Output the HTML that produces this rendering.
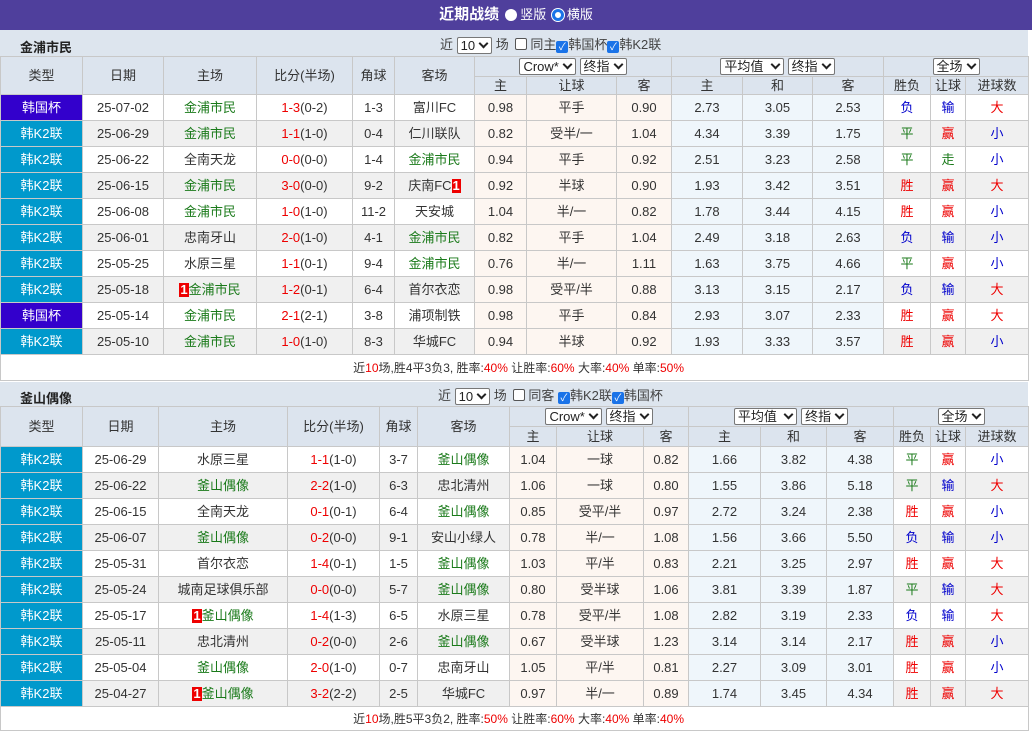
<!DOCTYPE html>
<html><head><meta charset="utf-8"><style>
*{margin:0;padding:0;box-sizing:border-box}
body{width:1032px;height:732px;background:#fff;font-family:"Liberation Sans","Noto Sans CJK SC",sans-serif;font-size:12px;color:#333;position:relative;overflow:hidden}
.top{position:absolute;left:0;top:0;width:1032px;height:30px;background:#4f3f9c;color:#fff;text-align:center;line-height:30px;font-size:13px}
.top b{font-size:15px;margin-right:4px}
.rad{display:inline-block;width:12px;height:12px;border-radius:50%;background:#fff;vertical-align:-2px;margin:0 3px 0 2px}
.rad.on{border:3px solid #1a73e8;background:#fff;box-shadow:0 0 0 1px #fff}
.sec{position:absolute;left:0;width:1028px}
.bar{height:26px;background:#dde5ee;position:relative;font-size:12px}
.bar .t{position:absolute;left:20px;top:7px;font-weight:bold;font-size:13px;color:#222}
.bar .c{position:absolute;top:4px;white-space:nowrap;font-size:13px;color:#444}
.sel{display:inline-block;border:1px solid #777;background:#fff;border-radius:2px;height:17px;line-height:15px;padding:0 3px;font-size:13px;color:#222;vertical-align:middle}
.sel:after{content:"";display:inline-block;width:5px;height:5px;border-right:2px solid #222;border-bottom:2px solid #222;transform:rotate(45deg);margin:0 1px 3px 5px}
.cb{display:inline-block;width:12px;height:12px;border:1px solid #555;border-radius:2px;background:#fff;vertical-align:-1px;margin:0 3px}
.cb.on{background:#1a73e8;border-color:#1a73e8;color:#fff;font-size:10px;line-height:11px;text-align:center;margin:0}
table{border-collapse:collapse;table-layout:fixed;width:1028px}
td,th{border:1px solid #c8c8c8;text-align:center;font-weight:normal;white-space:nowrap;overflow:hidden;padding:0}
th{background:#dce4ee;color:#333;font-size:13px;line-height:16px}
tr.d td{height:26px;font-size:13px;line-height:16px}
tr.d:nth-child(even) td{background:#f0f0f0}
tr.d td.p{background:#fdf6f1 !important}
tr.d td.b{background:#eff6fb !important}
.k1{background:#3300cc !important;color:#fff}
.k2{background:#0099cc !important;color:#fff}
.g{color:#1a7a1a}.r{color:#e00}.bl{color:#00c}
.n{display:inline-block;background:#e00;color:#fff;font-weight:bold;padding:0 1px;line-height:14px}
.sum td{height:26px;text-align:right;padding-right:344px;font-size:12px;background:#fff}
.sum span{color:#e00}
</style></head><body>
<div class="top"><b>近期战绩</b><span class="rad"></span>竖版 <span class="rad on"></span>横版</div>

<div class="sec" style="top:30px">
<div class="bar"><span class="t">金浦市民</span><span class="c" style="left:440px">近 <span class="sel">10</span> 场 <span class="cb"></span>同主<span class="cb on">✓</span>韩国杯<span class="cb on">✓</span>韩K2联</span></div>
<table>
<colgroup><col style="width:82px"><col style="width:81px"><col style="width:93px"><col style="width:96px"><col style="width:42px"><col style="width:80px"><col style="width:52px"><col style="width:90px"><col style="width:55px"><col style="width:71px"><col style="width:70px"><col style="width:71px"><col style="width:47px"><col style="width:35px"><col style="width:63px"></colgroup>
<tr style="height:20px"><th rowspan="2">类型</th><th rowspan="2">日期</th><th rowspan="2">主场</th><th rowspan="2">比分(半场)</th><th rowspan="2">角球</th><th rowspan="2">客场</th><th colspan="3"><span class="sel">Crow*</span> <span class="sel">终指</span></th><th colspan="3"><span class="sel">平均值&nbsp;</span> <span class="sel">终指</span></th><th colspan="3"><span class="sel">全场</span></th></tr>
<tr style="height:18px"><th>主</th><th>让球</th><th>客</th><th>主</th><th>和</th><th>客</th><th>胜负</th><th>让球</th><th>进球数</th></tr>
<tr class="d"><td class="k1">韩国杯</td><td>25-07-02</td><td class="g">金浦市民</td><td><span class="r">1-3</span>(0-2)</td><td>1-3</td><td>富川FC</td><td class="p">0.98</td><td class="p">平手</td><td class="p">0.90</td><td class="b">2.73</td><td class="b">3.05</td><td class="b">2.53</td><td class="bl">负</td><td class="bl">输</td><td class="r">大</td></tr>
<tr class="d"><td class="k2">韩K2联</td><td>25-06-29</td><td class="g">金浦市民</td><td><span class="r">1-1</span>(1-0)</td><td>0-4</td><td>仁川联队</td><td class="p">0.82</td><td class="p">受半/一</td><td class="p">1.04</td><td class="b">4.34</td><td class="b">3.39</td><td class="b">1.75</td><td class="g">平</td><td class="r">赢</td><td class="bl">小</td></tr>
<tr class="d"><td class="k2">韩K2联</td><td>25-06-22</td><td>全南天龙</td><td><span class="r">0-0</span>(0-0)</td><td>1-4</td><td class="g">金浦市民</td><td class="p">0.94</td><td class="p">平手</td><td class="p">0.92</td><td class="b">2.51</td><td class="b">3.23</td><td class="b">2.58</td><td class="g">平</td><td class="g">走</td><td class="bl">小</td></tr>
<tr class="d"><td class="k2">韩K2联</td><td>25-06-15</td><td class="g">金浦市民</td><td><span class="r">3-0</span>(0-0)</td><td>9-2</td><td>庆南FC<span class="n">1</span></td><td class="p">0.92</td><td class="p">半球</td><td class="p">0.90</td><td class="b">1.93</td><td class="b">3.42</td><td class="b">3.51</td><td class="r">胜</td><td class="r">赢</td><td class="r">大</td></tr>
<tr class="d"><td class="k2">韩K2联</td><td>25-06-08</td><td class="g">金浦市民</td><td><span class="r">1-0</span>(1-0)</td><td>11-2</td><td>天安城</td><td class="p">1.04</td><td class="p">半/一</td><td class="p">0.82</td><td class="b">1.78</td><td class="b">3.44</td><td class="b">4.15</td><td class="r">胜</td><td class="r">赢</td><td class="bl">小</td></tr>
<tr class="d"><td class="k2">韩K2联</td><td>25-06-01</td><td>忠南牙山</td><td><span class="r">2-0</span>(1-0)</td><td>4-1</td><td class="g">金浦市民</td><td class="p">0.82</td><td class="p">平手</td><td class="p">1.04</td><td class="b">2.49</td><td class="b">3.18</td><td class="b">2.63</td><td class="bl">负</td><td class="bl">输</td><td class="bl">小</td></tr>
<tr class="d"><td class="k2">韩K2联</td><td>25-05-25</td><td>水原三星</td><td><span class="r">1-1</span>(0-1)</td><td>9-4</td><td class="g">金浦市民</td><td class="p">0.76</td><td class="p">半/一</td><td class="p">1.11</td><td class="b">1.63</td><td class="b">3.75</td><td class="b">4.66</td><td class="g">平</td><td class="r">赢</td><td class="bl">小</td></tr>
<tr class="d"><td class="k2">韩K2联</td><td>25-05-18</td><td class="g"><span class="n">1</span>金浦市民</td><td><span class="r">1-2</span>(0-1)</td><td>6-4</td><td>首尔衣恋</td><td class="p">0.98</td><td class="p">受平/半</td><td class="p">0.88</td><td class="b">3.13</td><td class="b">3.15</td><td class="b">2.17</td><td class="bl">负</td><td class="bl">输</td><td class="r">大</td></tr>
<tr class="d"><td class="k1">韩国杯</td><td>25-05-14</td><td class="g">金浦市民</td><td><span class="r">2-1</span>(2-1)</td><td>3-8</td><td>浦项制铁</td><td class="p">0.98</td><td class="p">平手</td><td class="p">0.84</td><td class="b">2.93</td><td class="b">3.07</td><td class="b">2.33</td><td class="r">胜</td><td class="r">赢</td><td class="r">大</td></tr>
<tr class="d"><td class="k2">韩K2联</td><td>25-05-10</td><td class="g">金浦市民</td><td><span class="r">1-0</span>(1-0)</td><td>8-3</td><td>华城FC</td><td class="p">0.94</td><td class="p">半球</td><td class="p">0.92</td><td class="b">1.93</td><td class="b">3.33</td><td class="b">3.57</td><td class="r">胜</td><td class="r">赢</td><td class="bl">小</td></tr>
<tr class="sum"><td colspan="15">近<span>10</span>场,胜4平3负3, 胜率:<span>40%</span> 让胜率:<span>60%</span> 大率:<span>40%</span> 单率:<span>50%</span></td></tr>
</table>
</div>

<div class="sec" style="top:382px">
<div class="bar" style="height:24px"><span class="t" style="top:6px">釜山偶像</span><span class="c" style="left:438px;top:3px">近 <span class="sel">10</span> 场 <span class="cb"></span>同客 <span class="cb on">✓</span>韩K2联<span class="cb on">✓</span>韩国杯</span></div>
<table>
<colgroup><col style="width:82px"><col style="width:76px"><col style="width:129px"><col style="width:92px"><col style="width:38px"><col style="width:92px"><col style="width:47px"><col style="width:87px"><col style="width:45px"><col style="width:72px"><col style="width:66px"><col style="width:67px"><col style="width:37px"><col style="width:35px"><col style="width:63px"></colgroup>
<tr style="height:20px"><th rowspan="2">类型</th><th rowspan="2">日期</th><th rowspan="2">主场</th><th rowspan="2">比分(半场)</th><th rowspan="2">角球</th><th rowspan="2">客场</th><th colspan="3"><span class="sel">Crow*</span> <span class="sel">终指</span></th><th colspan="3"><span class="sel">平均值&nbsp;</span> <span class="sel">终指</span></th><th colspan="3"><span class="sel">全场</span></th></tr>
<tr style="height:20px"><th>主</th><th>让球</th><th>客</th><th>主</th><th>和</th><th>客</th><th>胜负</th><th>让球</th><th>进球数</th></tr>
<tr class="d"><td class="k2">韩K2联</td><td>25-06-29</td><td>水原三星</td><td><span class="r">1-1</span>(1-0)</td><td>3-7</td><td class="g">釜山偶像</td><td class="p">1.04</td><td class="p">一球</td><td class="p">0.82</td><td class="b">1.66</td><td class="b">3.82</td><td class="b">4.38</td><td class="g">平</td><td class="r">赢</td><td class="bl">小</td></tr>
<tr class="d"><td class="k2">韩K2联</td><td>25-06-22</td><td class="g">釜山偶像</td><td><span class="r">2-2</span>(1-0)</td><td>6-3</td><td>忠北清州</td><td class="p">1.06</td><td class="p">一球</td><td class="p">0.80</td><td class="b">1.55</td><td class="b">3.86</td><td class="b">5.18</td><td class="g">平</td><td class="bl">输</td><td class="r">大</td></tr>
<tr class="d"><td class="k2">韩K2联</td><td>25-06-15</td><td>全南天龙</td><td><span class="r">0-1</span>(0-1)</td><td>6-4</td><td class="g">釜山偶像</td><td class="p">0.85</td><td class="p">受平/半</td><td class="p">0.97</td><td class="b">2.72</td><td class="b">3.24</td><td class="b">2.38</td><td class="r">胜</td><td class="r">赢</td><td class="bl">小</td></tr>
<tr class="d"><td class="k2">韩K2联</td><td>25-06-07</td><td class="g">釜山偶像</td><td><span class="r">0-2</span>(0-0)</td><td>9-1</td><td>安山小绿人</td><td class="p">0.78</td><td class="p">半/一</td><td class="p">1.08</td><td class="b">1.56</td><td class="b">3.66</td><td class="b">5.50</td><td class="bl">负</td><td class="bl">输</td><td class="bl">小</td></tr>
<tr class="d"><td class="k2">韩K2联</td><td>25-05-31</td><td>首尔衣恋</td><td><span class="r">1-4</span>(0-1)</td><td>1-5</td><td class="g">釜山偶像</td><td class="p">1.03</td><td class="p">平/半</td><td class="p">0.83</td><td class="b">2.21</td><td class="b">3.25</td><td class="b">2.97</td><td class="r">胜</td><td class="r">赢</td><td class="r">大</td></tr>
<tr class="d"><td class="k2">韩K2联</td><td>25-05-24</td><td>城南足球俱乐部</td><td><span class="r">0-0</span>(0-0)</td><td>5-7</td><td class="g">釜山偶像</td><td class="p">0.80</td><td class="p">受半球</td><td class="p">1.06</td><td class="b">3.81</td><td class="b">3.39</td><td class="b">1.87</td><td class="g">平</td><td class="bl">输</td><td class="r">大</td></tr>
<tr class="d"><td class="k2">韩K2联</td><td>25-05-17</td><td class="g"><span class="n">1</span>釜山偶像</td><td><span class="r">1-4</span>(1-3)</td><td>6-5</td><td>水原三星</td><td class="p">0.78</td><td class="p">受平/半</td><td class="p">1.08</td><td class="b">2.82</td><td class="b">3.19</td><td class="b">2.33</td><td class="bl">负</td><td class="bl">输</td><td class="r">大</td></tr>
<tr class="d"><td class="k2">韩K2联</td><td>25-05-11</td><td>忠北清州</td><td><span class="r">0-2</span>(0-0)</td><td>2-6</td><td class="g">釜山偶像</td><td class="p">0.67</td><td class="p">受半球</td><td class="p">1.23</td><td class="b">3.14</td><td class="b">3.14</td><td class="b">2.17</td><td class="r">胜</td><td class="r">赢</td><td class="bl">小</td></tr>
<tr class="d"><td class="k2">韩K2联</td><td>25-05-04</td><td class="g">釜山偶像</td><td><span class="r">2-0</span>(1-0)</td><td>0-7</td><td>忠南牙山</td><td class="p">1.05</td><td class="p">平/半</td><td class="p">0.81</td><td class="b">2.27</td><td class="b">3.09</td><td class="b">3.01</td><td class="r">胜</td><td class="r">赢</td><td class="bl">小</td></tr>
<tr class="d"><td class="k2">韩K2联</td><td>25-04-27</td><td class="g"><span class="n">1</span>釜山偶像</td><td><span class="r">3-2</span>(2-2)</td><td>2-5</td><td>华城FC</td><td class="p">0.97</td><td class="p">半/一</td><td class="p">0.89</td><td class="b">1.74</td><td class="b">3.45</td><td class="b">4.34</td><td class="r">胜</td><td class="r">赢</td><td class="r">大</td></tr>
<tr class="sum"><td colspan="15" style="height:24px">近<span>10</span>场,胜5平3负2, 胜率:<span>50%</span> 让胜率:<span>60%</span> 大率:<span>40%</span> 单率:<span>40%</span></td></tr>
</table>
</div>
</body></html>
